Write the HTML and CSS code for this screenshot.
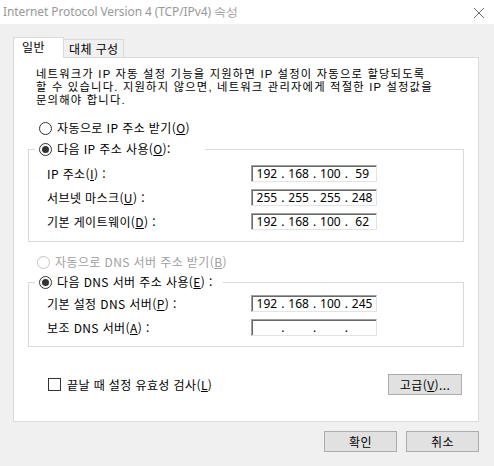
FILE: index.html
```html
<!DOCTYPE html>
<html lang="ko">
<head>
  <meta charset="UTF-8" />
  <title>Internet Protocol Version 4 (TCP/IPv4) 속성</title>
  <link rel="stylesheet" href="styles.css">
</head>
<body>
  <div class="titlebar">
    <span class="title">Internet Protocol Version 4 (TCP/IPv4) 속성</span>
    <svg class="close" width="12" height="12" viewBox="0 0 12 12">
      <path d="M1 1 L11 11 M11 1 L1 11" stroke="#6f6f6f" stroke-width="1" fill="none" />
    </svg>
  </div>

  <div class="tabs">
    <div class="tab tab-active">일반</div>
    <div class="tab">대체 구성</div>
  </div>

  <div class="panel">
    <div class="desc">
      <span>네트워크가 IP 자동 설정 기능을 지원하면 IP 설정이 자동으로 할당되도록</span>
      <span>할 수 있습니다. 지원하지 않으면, 네트워크 관리자에게 적절한 IP 설정값을</span>
      <span>문의해야 합니다.</span>
    </div>

    <div class="option option-first"><span class="radio"></span>자동으로 IP 주소 받기(<u>O</u>)</div>

    <fieldset class="group group-ip">
      <legend class="option legend-ip"><span class="radio checked"></span>다음 IP 주소 사용(<u>O</u>):</legend>
      <div class="fields">
        <span class="label">IP 주소(<u>I</u>) :</span>
        <div class="ipbox"><span>192</span><i>.</i><span>168</span><i>.</i><span>100</span><i>.</i><span>59</span></div>
        <span class="label">서브넷 마스크(<u>U</u>) :</span>
        <div class="ipbox"><span>255</span><i>.</i><span>255</span><i>.</i><span>255</span><i>.</i><span>248</span></div>
        <span class="label">기본 게이트웨이(<u>D</u>) :</span>
        <div class="ipbox"><span>192</span><i>.</i><span>168</span><i>.</i><span>100</span><i>.</i><span>62</span></div>
      </div>
    </fieldset>

    <div class="option option-dns disabled"><span class="radio"></span>자동으로 DNS 서버 주소 받기(<u>B</u>)</div>

    <fieldset class="group group-dns">
      <legend class="option legend-dns"><span class="radio checked"></span>다음 DNS 서버 주소 사용(<u>E</u>) :</legend>
      <div class="fields">
        <span class="label">기본 설정 DNS 서버(<u>P</u>) :</span>
        <div class="ipbox"><span>192</span><i>.</i><span>168</span><i>.</i><span>100</span><i>.</i><span>245</span></div>
        <span class="label">보조 DNS 서버(<u>A</u>) :</span>
        <div class="ipbox"><span></span><i>.</i><span></span><i>.</i><span></span><i>.</i><span></span></div>
      </div>
    </fieldset>

    <div class="check-row">
      <label class="check"><span class="checkbox"></span>끝날 때 설정 유효성 검사(<u>L</u>)</label>
      <button class="btn btn-adv">고급(<u>V</u>)...</button>
    </div>
  </div>

  <div class="actions">
    <button class="btn">확인</button>
    <button class="btn">취소</button>
  </div>
</body>
</html>
```

FILE: styles.css
```css
:root {
  --line: #dadada;
  --ui-font: "Noto Sans CJK KR", "Noto Sans", sans-serif;
}

body {
  margin: 0;
  width: 494px;
  height: 466px;
  background: #f0f0f0;
  font-family: var(--ui-font);
  font-size: 12px;
  letter-spacing: 0.4px;
  color: #000;
  overflow: hidden;
}

.titlebar {
  height: 24px;
  background: #fff;
  display: flex;
  align-items: center;
  justify-content: space-between;
  padding: 0 9px 0 3px;
}

.title {
  font-family: "Noto Sans", sans-serif;
  font-size: 12px;
  color: #999;
  letter-spacing: -0.1px;
}

.close {
  display: block;
  margin-top: 1px;
}

/* tabs */
.tabs {
  display: flex;
  align-items: flex-end;
  margin: 13px 0 0 13px;
  height: 20px;
  position: relative;
  z-index: 1;
}

.tab {
  box-sizing: border-box;
  height: 18px;
  padding: 1px 4px 0 5px;
  border: 1px solid var(--line);
  border-bottom: none;
  line-height: 16px;
  background: #f0f0f0;
}

.tab-active {
  width: 51px;
  height: 21px;
  margin-bottom: -1px;
  padding: 1px 0 0 8px;
  background: #fff;
  line-height: 16px;
}

.tab-active + .tab {
  border-left: none;
  width: 60px;
}

/* panel */
.panel {
  box-sizing: border-box;
  width: 466px;
  height: 365px;
  margin-left: 13px;
  background: #fff;
  border: 1px solid var(--line);
}

.desc {
  margin: 10px 0 0 22px;
  font-family: "Liberation Sans", "Noto Sans CJK KR", sans-serif;
  font-size: 11.3px;
  letter-spacing: 1.2px;
}

.desc span {
  display: block;
  height: 13px;
  line-height: 13px;
  white-space: nowrap;
}

.option {
  display: flex;
  align-items: center;
  height: 16px;
  line-height: 16px;
  white-space: nowrap;
}

.option-first {
  margin: 13px 0 0 25px;
}

.option-dns {
  margin: 12px 0 0 23px;
}

.disabled {
  color: #a0a0a0;
}

.radio {
  box-sizing: border-box;
  width: 13px;
  height: 13px;
  border: 1px solid #333;
  border-radius: 50%;
  background: #fff;
  margin-right: 5px;
  position: relative;
  flex: none;
}

.disabled .radio {
  border-color: #c4c4c4;
}

.radio.checked::after {
  content: "";
  position: absolute;
  left: 2px;
  top: 2px;
  width: 7px;
  height: 7px;
  border-radius: 50%;
  background: #333;
}

/* group boxes */
.group {
  box-sizing: border-box;
  width: 436px;
  margin: 5px 0 0 14px;
  padding: 8px 0 11px 18px;
  border: 1px solid var(--line);
}

.group-dns {
  margin-top: 4px;
  padding: 5px 0 10px 18px;
}

.group legend {
  box-sizing: border-box;
  margin-left: -12px;
  padding: 0 0 0 4px;
}

.legend-ip {
  width: 170px;
}

.legend-dns {
  width: 188px;
}

.fields {
  display: grid;
  grid-template-columns: 204px 126px;
  row-gap: 7px;
  align-items: center;
}

.label {
  line-height: 16px;
}

.ipbox {
  box-sizing: border-box;
  width: 126px;
  height: 17px;
  display: flex;
  align-items: center;
  padding-left: 1px;
  border: 1px solid;
  border-color: #a0a0a0 #e3e3e3 #e3e3e3 #a0a0a0;
  box-shadow: inset 1px 1px 0 #696969;
  background: #fff;
  font-family: "Noto Sans", sans-serif;
  font-size: 12px;
  letter-spacing: 0;
  line-height: 15px;
}

.ipbox span {
  width: 28px;
  text-align: center;
}

.ipbox i {
  font-style: normal;
  width: 4px;
  text-align: center;
}

/* bottom of panel */
.check-row {
  display: flex;
  align-items: center;
  justify-content: space-between;
  width: 414px;
  margin: 27px 0 0 34px;
}

.check {
  display: flex;
  align-items: center;
}

.checkbox {
  box-sizing: border-box;
  width: 13px;
  height: 13px;
  border: 1px solid #333;
  background: #fff;
  margin-right: 6px;
}

.btn {
  box-sizing: border-box;
  width: 72px;
  height: 21px;
  padding: 0;
  background: #e1e1e1;
  border: 1px solid #adadad;
  font-family: var(--ui-font);
  font-size: 12px;
  letter-spacing: 0.4px;
  line-height: 19px;
  color: #000;
}

.btn-adv {
  width: 74px;
}

.actions {
  display: flex;
  justify-content: flex-end;
  gap: 9px;
  margin-top: 9px;
  padding-right: 15px;
}

.actions .btn {
  width: 73px;
}
```
